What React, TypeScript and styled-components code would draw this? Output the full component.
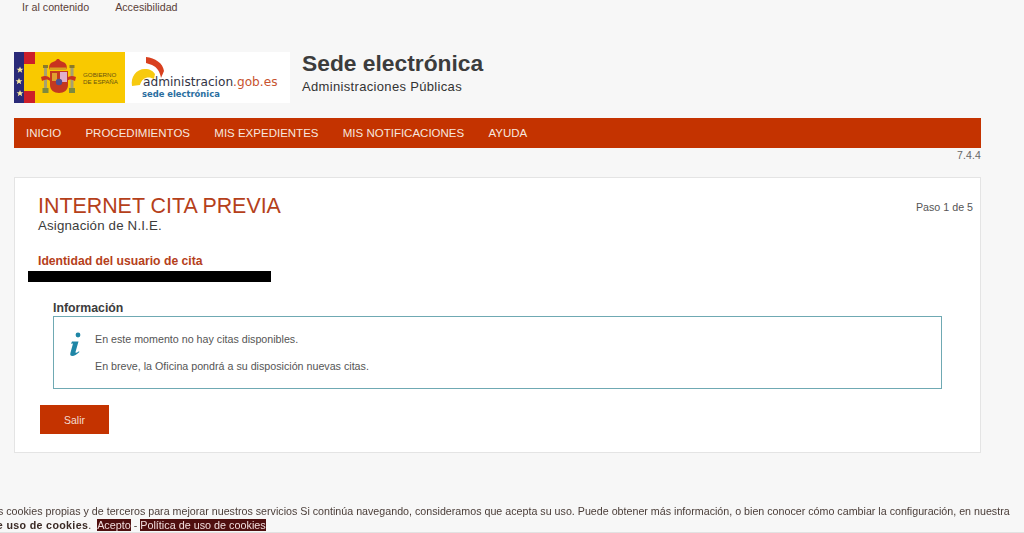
import React from "react";
import styled, { createGlobalStyle } from "styled-components";

const Global = createGlobalStyle`
  html, body { margin: 0; padding: 0; height: 533px; overflow: hidden; background: #f7f7f7; }
  body { font-family: "Liberation Sans", Arial, sans-serif; color: #333; }
`;
const Page = styled.div`
  padding: 0 43px 0 14px;
`;
const SkipLinks = styled.nav`
  display: flex;
  gap: 26px;
  padding: 1px 0 0 8px;
  height: 52px;
  box-sizing: border-box;
  font-size: 10.7px;
  line-height: 13px;
  color: #5a4038;
`;
const Header = styled.header`
  display: flex;
  height: 51px;
  align-items: flex-start;
  gap: 12px;
`;
const LogoBox = styled.div`
  display: flex;
  width: 276px;
  height: 51px;
  background: #fff;
`;
const Titles = styled.div`
  display: flex;
  flex-direction: column;
`;
const SiteTitle = styled.h1`
  margin: -3px 0 0;
  font-size: 22.8px;
  line-height: 28px;
  font-weight: 700;
  color: #3c3c3c;
`;
const SiteSub = styled.div`
  margin-top: 2px;
  font-size: 13px;
  line-height: 16px;
  letter-spacing: 0.33px;
  color: #333;
`;
const Nav = styled.nav`
  display: flex;
  align-items: center;
  gap: 24.3px;
  height: 30px;
  margin-top: 15px;
  padding-left: 12px;
  background: #c43300;
`;
const NavItem = styled.a`
  font-size: 11.5px;
  color: #f7e6df;
`;
const Version = styled.div`
  text-align: right;
  font-size: 10.5px;
  line-height: 14px;
  letter-spacing: 0.15px;
  color: #666;
`;
const Card = styled.main`
  position: relative;
  box-sizing: border-box;
  height: 276px;
  margin-top: 15px;
  padding: 16px 23px 0;
  background: #fff;
  border: 1px solid #e4e4e4;
`;
const Step = styled.div`
  position: absolute;
  top: 23px;
  right: 7px;
  font-size: 10.7px;
  line-height: 13px;
  color: #555;
`;
const CardTitle = styled.h2`
  margin: 0;
  font-size: 21.4px;
  line-height: 25px;
  font-weight: 400;
  color: #b5401a;
`;
const CardSub = styled.div`
  margin-top: -1px;
  font-size: 13.3px;
  line-height: 15px;
  letter-spacing: 0.17px;
  color: #3c3c3c;
`;
const Identity = styled.h3`
  margin: 21px 0 0;
  font-size: 12.2px;
  line-height: 14px;
  font-weight: 700;
  color: #b5401a;
`;
const Redacted = styled.div`
  width: 243px;
  height: 11px;
  margin: 3px 0 0 -10px;
  background: #000;
`;
const InfoSection = styled.section`
  margin: 19px 15px 0;
  width: 889px;
`;
const InfoTitle = styled.h4`
  margin: 0;
  font-size: 12.3px;
  line-height: 14px;
  font-weight: 700;
  color: #3c3c3c;
`;
const InfoBox = styled.div`
  display: flex;
  box-sizing: border-box;
  height: 73px;
  margin-top: 1px;
  padding: 16px 0 0 15px;
  gap: 13px;
  border: 1px solid #6fa9b3;
`;
const InfoIcon = styled.svg`
  flex: none;
  width: 13px;
  height: 24px;
  margin-top: -1px;
`;
const InfoText = styled.div`
  font-size: 10.7px;
  line-height: 12px;
  color: #555;
  p { margin: 0 0 15px; }
`;
const Exit = styled.button`
  display: block;
  width: 69px;
  height: 29px;
  margin: 16px 0 0 2px;
  padding: 0;
  border: 0;
  background: #c43300;
  color: #f3dcd2;
  font: 10.5px "Liberation Sans", Arial, sans-serif;
`;
const Cookie = styled.div`
  position: fixed;
  top: 504px;
  left: -46px;
  width: 1070px;
  height: 28px;
  border-bottom: 1px solid #e2e2e2;
  font-size: 10.7px;
  line-height: 14px;
  color: #4a3d38;
  white-space: nowrap;
`;
const CookieBold = styled.strong`
  color: #3a2a25;
  letter-spacing: 0.33px;
`;
const CookieBtn = styled.a`
  background: #4f0f0f;
  color: #f0dcdc;
  font-size: 10.8px;
`;
const CookieLine2 = styled.div`
  margin-left: -8px;
`;

function Logos() {
  return (
    <svg width="276" height="51" viewBox="0 0 276 51" role="img" aria-label="Gobierno de España, administracion.gob.es">
      <rect width="111" height="51" fill="#f9c900" />
      <rect width="10" height="51" fill="#2a2a78" />
      <rect x="10" width="11" height="12" fill="#cc1f2a" />
      <rect x="10" y="39" width="11" height="12" fill="#cc1f2a" />
      <path d="M6 14.500l1 2.300h2.400l-1.900 1.500.7 2.400-2.200-1.400-2.200 1.400.7-2.400-1.900-1.500H5zM5 26l1 2.300h2.400l-1.900 1.500.7 2.400-2.200-1.400-2.200 1.400.7-2.400L1.600 28.300H4zM6 38l1 2.300h2.400l-1.900 1.500.7 2.400-2.200-1.400-2.200 1.400.7-2.400-1.900-1.500H5z" fill="#f7e9a0" />
      {/* crown */}
      <path d="M36 18c-2-4 0-7 3-8 1.500-.6 3-1 4-3h2c1 2 2.500 2.400 4 3 3 1 5 4 3 8z" fill="#c8341f" />
      <rect x="36" y="15.500" width="16" height="2.500" fill="#d8a020" />
      {/* pillars */}
      <rect x="29" y="13" width="5" height="3" fill="#8a7a28" />
      <rect x="55.500" y="13" width="5" height="3" fill="#8a7a28" />
      <rect x="30" y="16" width="3" height="20" fill="#a8a070" />
      <rect x="56.500" y="16" width="3" height="20" fill="#a8a070" />
      <path d="M28.500 36h6v5h-6zM55 36h6v5h-6z" fill="#7d8a3e" />
      {/* ribbons */}
      <path d="M27 25c4-2 7-1 9 1v3c-2-2-5-2-8 0zM62 25c-4-2-7-1-9 1v3c2-2 5-2 8 0z" fill="#c8341f" />
      {/* shield */}
      <path d="M36 19h18v14c0 5-4 8-9 8s-9-3-9-8z" fill="#c4391f" />
      <rect x="46" y="20" width="7" height="10" fill="#e0b0cc" />
      <rect x="38" y="21" width="5" height="8" fill="#e0a030" />
      <circle cx="45" cy="30" r="3.200" fill="#4a4f96" />
      <text x="69" y="25" fontFamily="'Liberation Sans', Arial, sans-serif" fontSize="6.200" fill="#6a5410">GOBIERNO</text>
      <text x="69" y="32" fontFamily="'Liberation Sans', Arial, sans-serif" fontSize="6.200" fill="#6a5410">DE ESPAÑA</text>
      {/* swooshes */}
      <path d="M132 5c9 1 17 6 18 14l-3 7c-1-6-4-11-9-13l-6-2z" fill="#d8401f" />
      <path d="M118 34c-1.500-9 4-17 13-17 5 0 8 2 10 5l-1 5c-5-3-12-2-14 6z" fill="#f7ca10" />
      <text x="129" y="34" fontFamily="'DejaVu Sans', sans-serif" fontSize="12.150"><tspan fill="#333344">administracion</tspan><tspan fill="#c8532f">.gob.es</tspan></text>
      <text x="128" y="45" fontFamily="'DejaVu Sans', sans-serif" fontSize="8.400" fontWeight="700" fill="#2a6ea0">sede electrónica</text>
    </svg>
  );
}

export default function App() {
  return (
    <>
      <Global />
      <Page>
        <SkipLinks>
          <a>Ir al contenido</a>
          <a>Accesibilidad</a>
        </SkipLinks>
        <Header>
          <LogoBox><Logos /></LogoBox>
          <Titles>
            <SiteTitle>Sede electrónica</SiteTitle>
            <SiteSub>Administraciones Públicas</SiteSub>
          </Titles>
        </Header>
        <Nav>
          <NavItem>INICIO</NavItem>
          <NavItem>PROCEDIMIENTOS</NavItem>
          <NavItem>MIS EXPEDIENTES</NavItem>
          <NavItem>MIS NOTIFICACIONES</NavItem>
          <NavItem>AYUDA</NavItem>
        </Nav>
        <Version>7.4.4</Version>
        <Card>
          <Step>Paso 1 de 5</Step>
          <CardTitle>INTERNET CITA PREVIA</CardTitle>
          <CardSub>Asignación de N.I.E.</CardSub>
          <Identity>Identidad del usuario de cita</Identity>
          <Redacted />
          <InfoSection>
            <InfoTitle>Información</InfoTitle>
            <InfoBox>
              <InfoIcon viewBox="0 0 13 24">
                <circle cx="9" cy="3" r="2.400" fill="#1f86a6" />
                <path d="M3 9.500h6.500L6.500 20c-.3 1 .6 1.300 3.500-.8l.4.8c-3 2.800-5 4-7 4-2 0-2.500-1.300-2-3l2.600-9.500-2 .2z" fill="#1f86a6" />
              </InfoIcon>
              <InfoText>
                <p>En este momento no hay citas disponibles.</p>
                <p>En breve, la Oficina pondrá a su disposición nuevas citas.</p>
              </InfoText>
            </InfoBox>
          </InfoSection>
          <Exit>Salir</Exit>
        </Card>
      </Page>
      <Cookie>
        <div>Utilizamos cookies propias y de terceros para mejorar nuestros servicios Si continúa navegando, consideramos que acepta su uso. Puede obtener más información, o bien conocer cómo cambiar la configuración, en nuestra</div>
        <CookieLine2>
          <CookieBold>Política de uso de cookies</CookieBold>.&nbsp;&nbsp;<CookieBtn>Acepto</CookieBtn> - <CookieBtn>Política de uso de cookies</CookieBtn>
        </CookieLine2>
      </Cookie>
    </>
  );
}
